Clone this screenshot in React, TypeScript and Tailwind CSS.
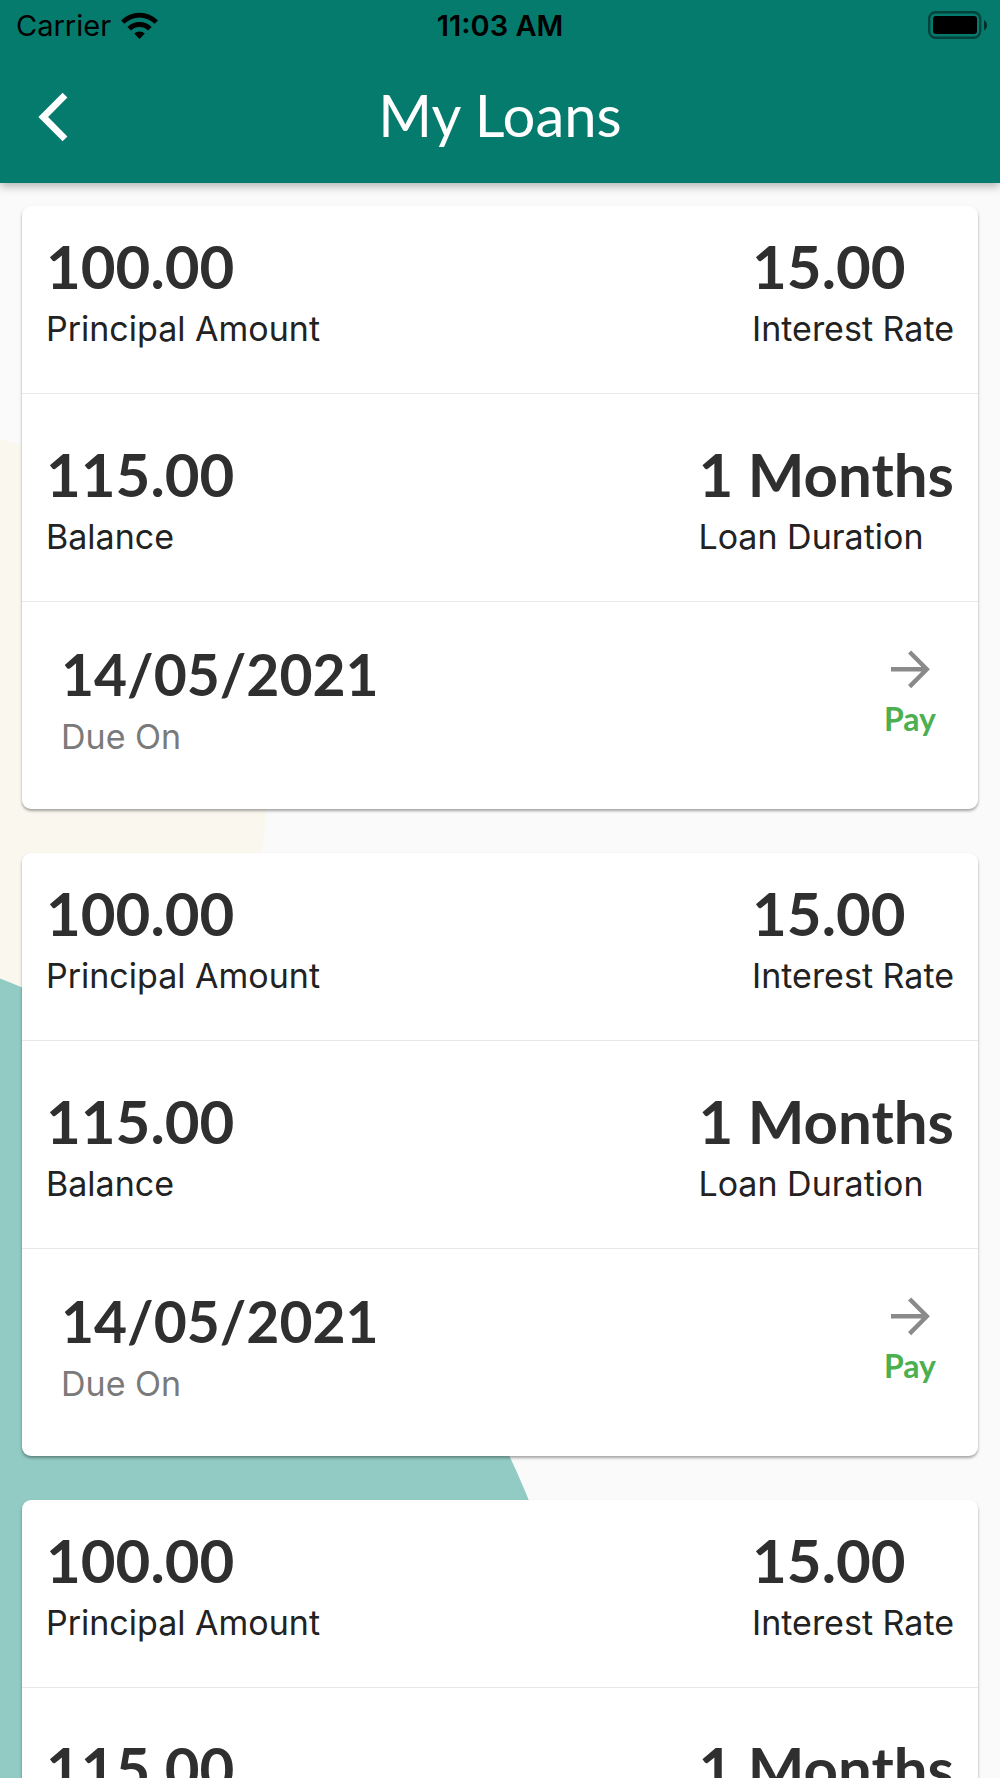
import classNames from 'clsx';

interface Loan {
  id: number;
  principal: string;
  rate: string;
  balance: string;
  duration: string;
  dueOn: string;
}

interface FigureProps {
  value: string;
  label: string;
  muted?: boolean;
}

const loans: Loan[] = [1, 2, 3].map((id) => ({
  id,
  principal: '100.00',
  rate: '15.00',
  balance: '115.00',
  duration: '1 Months',
  dueOn: '14/05/2021',
}));

const WifiIcon = () => (
  <svg viewBox="0 0 37 27" className="h-[27px] w-[37px]" aria-hidden="true">
    <path d="M0 8.4A26 26 0 0 1 37 8.4L33.6 11.8A21.3 21.3 0 0 0 3.4 11.8Z" />
    <path d="M6.4 14.9A17.2 17.2 0 0 1 30.6 14.9L27 18.4A12.1 12.1 0 0 0 10 18.4Z" />
    <path d="M13.2 21.6A7.6 7.6 0 0 1 23.8 21.6L18.5 27Z" />
  </svg>
);

const BatteryIcon = () => (
  <svg viewBox="0 0 60 28" className="h-7 w-[60px]" aria-hidden="true">
    <rect x="1.2" y="1.2" width="51" height="25.6" rx="6.5" fill="none" stroke="#000" strokeOpacity="0.45" strokeWidth="2.4" />
    <rect x="5" y="5" width="44" height="18" rx="3" />
    <path d="M56 9a6 6 0 0 1 0 10.4Z" fillOpacity="0.6" />
  </svg>
);

const Figure = ({ value, label, muted }: FigureProps) => (
  <div className="flex flex-col gap-[11px]">
    <span
      className={classNames(
        "font-['Lato',sans-serif] leading-[64px] font-bold text-[#2f2f2f]",
        muted ? 'text-[57px]' : 'text-[60px]'
      )}
    >
      {value}
    </span>
    <span
      className={classNames(
        "font-['Inter',sans-serif] text-[34px] leading-[40px]",
        muted ? 'text-[#7a7a7a]' : 'text-[#222]'
      )}
    >
      {label}
    </span>
  </div>
);

const LoanCard = ({ loan }: { loan: Loan }) => (
  <article className="rounded-[9px] bg-white shadow-[0_2px_3px_rgba(0,0,0,0.35)]">
    <div className="flex justify-between border-b border-[#e8e8e8] px-6 pt-7 pb-11">
      <Figure value={loan.principal} label="Principal Amount" />
      <Figure value={loan.rate} label="Interest Rate" />
    </div>
    <div className="flex justify-between border-b border-[#e8e8e8] px-6 pt-12 pb-11">
      <Figure value={loan.balance} label="Balance" />
      <Figure value={loan.duration} label="Loan Duration" />
    </div>
    <div className="flex items-start justify-between px-[39px] pt-10 pb-[52px]">
      <Figure value={loan.dueOn} label="Due On" muted />
      <button type="button" className="flex cursor-pointer flex-col items-center gap-[3px]">
        <svg viewBox="0 0 58 54" className="h-[54px] w-[58px]" fill="none" stroke="#8a8a8a" strokeWidth="4.4" aria-hidden="true">
          <path d="M10 27.3H46M28.6 10L45.8 27.3L28.6 44.6" />
        </svg>
        <span className="font-['Lato',sans-serif] text-[32px] leading-[40px] font-bold text-[#4caf50]">Pay</span>
      </button>
    </div>
  </article>
);

const App = () => {
  return (
    <div className="relative flex h-screen w-full flex-col overflow-hidden bg-[#fafafa]">
      {/* Backdrop circles */}
      <div className="absolute top-[426px] -left-[461px] size-[728px] rounded-full bg-[#faf7ef]" />
      <div className="absolute top-[915px] -left-[1275px] size-[1872px] rounded-full bg-[#92cac4]" />

      <header className="relative z-10 bg-[#057b6e] shadow-[0_3px_9px_rgba(0,0,0,0.3)]">
        {/* Status bar */}
        <div className="grid h-[50px] grid-cols-3 items-center px-4 font-['Inter',sans-serif] text-[29px] leading-none text-black">
          <div className="flex items-center gap-[10px]">
            <span>Carrier</span>
            <WifiIcon />
          </div>
          <span className="text-center font-semibold">11:03 AM</span>
          <div className="-mr-1 flex justify-end">
            <BatteryIcon />
          </div>
        </div>

        {/* Title bar */}
        <div className="grid h-[133px] grid-cols-[100px_1fr_100px] items-center">
          <button type="button" aria-label="Back" className="cursor-pointer pl-[38px]">
            <svg viewBox="0 0 30 50" className="h-[50px] w-[30px]" fill="none" stroke="#fff" strokeWidth="6.8">
              <path d="M27 3.2L5.2 25L27 46.8" />
            </svg>
          </button>
          <h1 className="pb-1 text-center font-['Lato',sans-serif] text-[58px] leading-[64px] text-white">My Loans</h1>
        </div>
      </header>

      <main className="relative flex flex-1 flex-col gap-11 overflow-y-auto px-[22px] py-[23px] [scrollbar-width:none]">
        {loans.map((loan) => (
          <LoanCard key={loan.id} loan={loan} />
        ))}
      </main>
    </div>
  );
};

export default App;
